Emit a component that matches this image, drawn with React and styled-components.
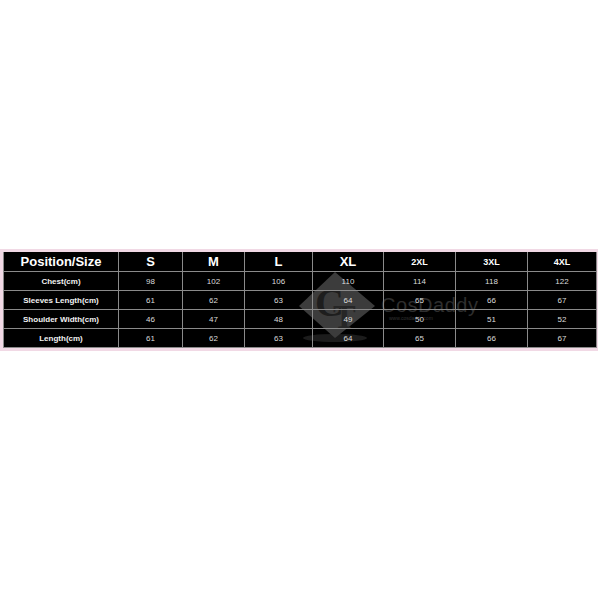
import React from 'react';
import styled, { createGlobalStyle } from 'styled-components';

const Global = createGlobalStyle`
  html, body { margin: 0; padding: 0; background: #fff; }
  body { font-family: "Liberation Sans", Arial, sans-serif; }
`;

const Page = styled.div`
  width: 600px;
  height: 600px;
  display: flex;
  align-items: center;
  justify-content: flex-start;
`;

const Frame = styled.div`
  position: relative;
  width: 598px;
  box-sizing: border-box;
  padding: 3px 2px 3px 3px;
  background: #f1d9e5;
`;

const Sheet = styled.div`
  position: relative;
  background: #000;
`;

const Table = styled.table`
  position: relative;
  z-index: 1;
  width: 100%;
  border-collapse: collapse;
  background: transparent;
  table-layout: fixed;
`;

const Cell = styled.td`
  border: 1px solid #8a8a8a;
  color: ${p => (p.$label ? '#f2f2f2' : '#dcdcdc')};
  font-size: 8px;
  font-weight: ${p => (p.$label ? 700 : 400)};
  text-align: center;
  height: 18px;
  padding: 0;
`;

const Head = styled.th`
  border: 1px solid #8a8a8a;
  border-top: none;
  color: #fff;
  font-size: ${p => (p.$small ? '9px' : '13px')};
  font-weight: 700;
  text-align: center;
  height: 19px;
  padding: 0;
`;

const Watermark = styled.div`
  position: absolute;
  z-index: 0;
  left: 290px;
  top: 14px;
  display: flex;
  align-items: center;
  gap: 2px;
  pointer-events: none;
`;

const Brand = styled.div`
  display: flex;
  flex-direction: column;
  color: #2e2e2e;
  margin-top: 6px;
`;

const BrandName = styled.span`
  font-size: 20px;
  line-height: 20px;
  letter-spacing: 0.5px;
`;

const BrandUrl = styled.span`
  font-size: 5px;
  padding-left: 8px;
  color: #333;
`;

const cols = [115, 64, 62, 68, 71, 72, 72, 69];
const sizes = ['S', 'M', 'L', 'XL', '2XL', '3XL', '4XL'];
const rows = [
  ['Chest(cm)', 98, 102, 106, 110, 114, 118, 122],
  ['Sleeves Length(cm)', 61, 62, 63, 64, 65, 66, 67],
  ['Shoulder Width(cm)', 46, 47, 48, 49, 50, 51, 52],
  ['Length(cm)', 61, 62, 63, 64, 65, 66, 67],
];

const Logo = () => (
  <svg width="86" height="78" viewBox="0 0 86 78">
    <ellipse cx="42" cy="72" rx="32" ry="4" fill="#1c1c1c" />
    <polygon points="42,6 82,40 42,72 6,40" fill="#3c3c3c" />
    <text x="22" y="50" fontFamily="Liberation Serif, serif" fontWeight="700" fontSize="40" fill="#1e1e1e">C</text>
    <text x="40" y="62" fontFamily="Liberation Serif, serif" fontWeight="700" fontSize="34" fill="#262626">T</text>
  </svg>
);

export default function App() {
  return (
    <>
      <Global />
      <Page>
        <Frame>
          <Sheet>
            <Watermark>
              <Logo />
              <Brand>
                <BrandName>CosDaddy</BrandName>
                <BrandUrl>www.cosdaddy.com</BrandUrl>
              </Brand>
            </Watermark>
            <Table>
              <colgroup>
                {cols.map((w, i) => <col key={i} style={{ width: w }} />)}
              </colgroup>
              <thead>
                <tr>
                  <Head>Position/Size</Head>
                  {sizes.map(s => (
                    <Head key={s} $small={s.length > 2}>{s}</Head>
                  ))}
                </tr>
              </thead>
              <tbody>
                {rows.map(r => (
                  <tr key={r[0]}>
                    {r.map((v, i) => (
                      <Cell key={i} $label={i === 0}>{v}</Cell>
                    ))}
                  </tr>
                ))}
              </tbody>
            </Table>
          </Sheet>
        </Frame>
      </Page>
    </>
  );
}
